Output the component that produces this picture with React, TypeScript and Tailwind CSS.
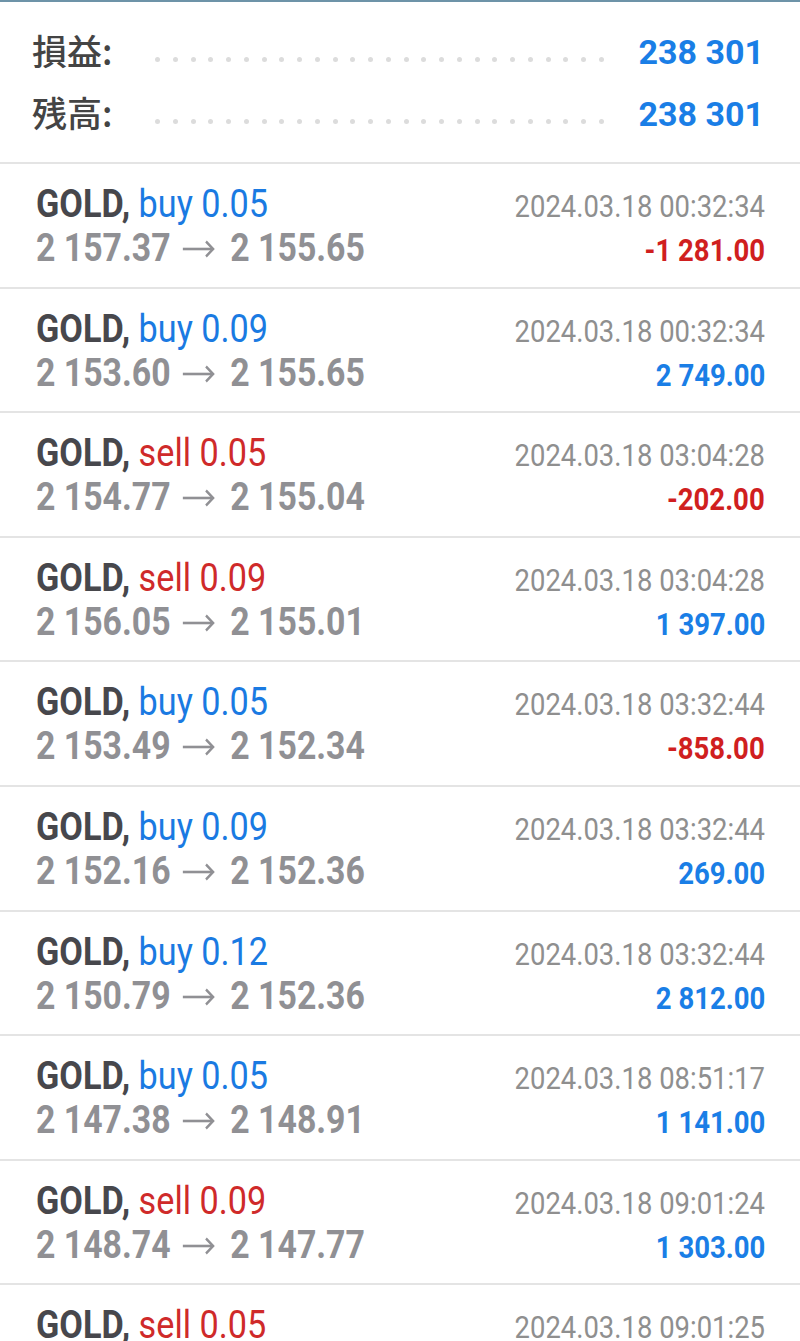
import React from "react"

type Deal = {
  side: "buy" | "sell"
  volume: string
  open: string
  close: string
  time: string
  profit: string
}

const deals: Deal[] = [
  { side: "buy", volume: "0.05", open: "2 157.37", close: "2 155.65", time: "2024.03.18 00:32:34", profit: "-1 281.00" },
  { side: "buy", volume: "0.09", open: "2 153.60", close: "2 155.65", time: "2024.03.18 00:32:34", profit: "2 749.00" },
  { side: "sell", volume: "0.05", open: "2 154.77", close: "2 155.04", time: "2024.03.18 03:04:28", profit: "-202.00" },
  { side: "sell", volume: "0.09", open: "2 156.05", close: "2 155.01", time: "2024.03.18 03:04:28", profit: "1 397.00" },
  { side: "buy", volume: "0.05", open: "2 153.49", close: "2 152.34", time: "2024.03.18 03:32:44", profit: "-858.00" },
  { side: "buy", volume: "0.09", open: "2 152.16", close: "2 152.36", time: "2024.03.18 03:32:44", profit: "269.00" },
  { side: "buy", volume: "0.12", open: "2 150.79", close: "2 152.36", time: "2024.03.18 03:32:44", profit: "2 812.00" },
  { side: "buy", volume: "0.05", open: "2 147.38", close: "2 148.91", time: "2024.03.18 08:51:17", profit: "1 141.00" },
  { side: "sell", volume: "0.09", open: "2 148.74", close: "2 147.77", time: "2024.03.18 09:01:24", profit: "1 303.00" },
  { side: "sell", volume: "0.05", open: "2 148.80", close: "2 147.70", time: "2024.03.18 09:01:25", profit: "550.00" },
]

const Arrow = () => (
  <svg
    viewBox="0 0 37 20"
    width={37}
    height={20}
    className="mb-[4px] ml-[13px] mr-[17px] inline-block"
    fill="none"
    stroke="currentColor"
    strokeWidth={2.6}
  >
    <path d="M1 10H35" />
    <path d="M27 2.5L35 10L27 17.5" />
  </svg>
)

const SummaryRow = ({ label, value }: { label: string; value: string }) => (
  <div className="flex h-[62px] items-center pl-[32px] pr-[36px]">
    <span className="w-[123px] text-[35px] font-medium leading-none text-[#444444] [font-family:'Noto_Sans_CJK_JP','Noto_Sans',sans-serif]">
      {label}
    </span>
    <div className="mt-[20px] flex w-[451px] items-center justify-between pr-[2px]">
      {Array.from({ length: 26 }).map((_, i) => (
        <span key={i} className="h-[5px] w-[5px] rounded-full bg-[#dcdcdc]" />
      ))}
    </div>
    <span className="mt-[5px] flex-1 text-right text-[34px] font-bold leading-none text-[#1a7ee6]">{value}</span>
  </div>
)

const DealRow = ({ deal }: { deal: Deal }) => {
  const sideColor = deal.side === "buy" ? "text-[#1a7ae2]" : "text-[#cf2a2a]"
  const profitColor = deal.profit.startsWith("-") ? "text-[#d01f1f]" : "text-[#1a7ee6]"
  return (
    <div className="h-[124.6px] border-b-2 border-[#e4e4e4] pl-[36px] pr-[35px] pt-[18px]">
      <div className="flex h-[44px] items-baseline justify-between">
        <span className="inline-block origin-left scale-x-[0.9] whitespace-nowrap text-[38px] leading-[44px]">
          <span className="font-bold text-[#47474c]">GOLD,</span>{" "}
          <span className={sideColor}>
            {deal.side} {deal.volume}
          </span>
        </span>
        <span className="inline-block origin-right scale-x-[0.885] whitespace-nowrap text-[31px] leading-[44px] text-[#8f8f8f]">
          {deal.time}
        </span>
      </div>
      <div className="flex h-[44px] items-baseline justify-between">
        <span className="inline-block origin-left scale-x-[0.89] whitespace-nowrap text-[38px] font-bold leading-[44px] text-[#909094]">
          {deal.open}
          <Arrow />
          {deal.close}
        </span>
        <span className={`inline-block origin-right scale-x-[0.86] whitespace-nowrap text-[32px] font-bold leading-[44px] ${profitColor}`}>
          {deal.profit}
        </span>
      </div>
    </div>
  )
}

export default function App() {
  return (
    <div className="h-[1341px] w-[800px] overflow-hidden bg-white [font-family:Roboto,'Noto_Sans',sans-serif]">
      <div className="h-[2px] bg-[#6d93a8]" />
      <div className="h-[162px] border-b-2 border-[#e4e4e4] pt-[16px]">
        <SummaryRow label="損益:" value="238 301" />
        <SummaryRow label="残高:" value="238 301" />
      </div>
      {deals.map((deal, i) => (
        <DealRow key={i} deal={deal} />
      ))}
    </div>
  )
}
